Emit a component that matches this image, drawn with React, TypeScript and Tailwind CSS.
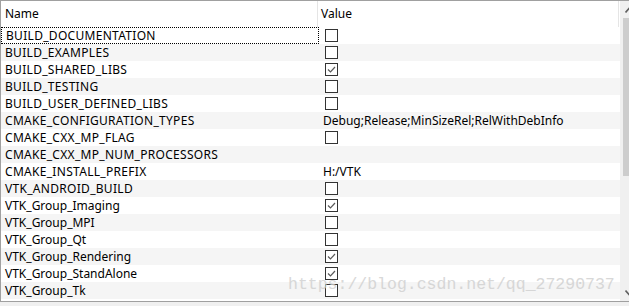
import React from 'react';

type Entry = {
  name: string;
  kind: 'bool' | 'text';
  checked?: boolean;
  value?: string;
};

const entries: Entry[] = [
  { name: 'BUILD_DOCUMENTATION', kind: 'bool', checked: false },
  { name: 'BUILD_EXAMPLES', kind: 'bool', checked: false },
  { name: 'BUILD_SHARED_LIBS', kind: 'bool', checked: true },
  { name: 'BUILD_TESTING', kind: 'bool', checked: false },
  { name: 'BUILD_USER_DEFINED_LIBS', kind: 'bool', checked: false },
  { name: 'CMAKE_CONFIGURATION_TYPES', kind: 'text', value: 'Debug;Release;MinSizeRel;RelWithDebInfo' },
  { name: 'CMAKE_CXX_MP_FLAG', kind: 'bool', checked: false },
  { name: 'CMAKE_CXX_MP_NUM_PROCESSORS', kind: 'text', value: '' },
  { name: 'CMAKE_INSTALL_PREFIX', kind: 'text', value: 'H:/VTK' },
  { name: 'VTK_ANDROID_BUILD', kind: 'bool', checked: false },
  { name: 'VTK_Group_Imaging', kind: 'bool', checked: true },
  { name: 'VTK_Group_MPI', kind: 'bool', checked: false },
  { name: 'VTK_Group_Qt', kind: 'bool', checked: false },
  { name: 'VTK_Group_Rendering', kind: 'bool', checked: true },
  { name: 'VTK_Group_StandAlone', kind: 'bool', checked: true },
  { name: 'VTK_Group_Tk', kind: 'bool', checked: false },
];

const CheckBox: React.FC<{ checked?: boolean }> = ({ checked }) => (
  <div className="w-[13px] h-[13px] border border-[#333333] bg-white flex items-center justify-center">
    {checked && (
      <svg width="11" height="11" viewBox="0 0 11 11">
        <path d="M2 5.5 L4.5 8 L9 3" fill="none" stroke="#5a5a5a" strokeWidth="1.2" />
      </svg>
    )}
  </div>
);

export default function App() {
  return (
    <div
      className="relative w-[629px] h-[306px] overflow-hidden bg-[#f0f0f0] text-[12px] text-black"
      style={{ fontFamily: '"Noto Sans", "Open Sans", sans-serif' }}
    >
      <div className="flex h-[302px] border-t border-b border-l border-[#a0a0a0] bg-white">
        {/* table */}
        <div className="w-[619px] flex-none flex flex-col">
          <div className="flex h-[26px] flex-none items-center bg-white">
            <div className="w-[317px] h-full flex items-center pl-[4px] border-r border-[#e5e5e5]">Name</div>
            <div className="w-[301px] h-full flex items-center pl-[3px] border-r border-[#e5e5e5]">Value</div>
          </div>
          {entries.map((e, i) => (
            <div
              key={e.name}
              className={`flex h-[17px] flex-none ${i % 2 === 1 ? 'bg-[#f5f5f5]' : 'bg-white'}`}
            >
              <div
                className={`w-[318px] flex items-center pl-[4px] leading-none ${
                  i === 0 ? 'border border-dotted border-black pl-[3px]' : ''
                }`}
              >
                {/* upper-case names render a bit wider in the original UI font */}
                <span className={e.name === e.name.toUpperCase() ? 'tracking-[0.3px]' : ''}>{e.name}</span>
              </div>
              <div className="flex-1 flex items-center leading-none">
                {e.kind === 'bool' ? (
                  <div className="pl-[6px]">
                    <CheckBox checked={e.checked} />
                  </div>
                ) : (
                  <span className="pl-[4px]">{e.value}</span>
                )}
              </div>
            </div>
          ))}
        </div>
        {/* vertical scrollbar */}
        <div className="w-[17px] flex-none flex flex-col bg-[#f0f0f0] border-l border-[#f0f0f0]">
          <div className="h-[17px] flex items-center justify-center">
            <svg width="9" height="6" viewBox="0 0 9 6">
              <path d="M0.5 5.5 L4.5 1 L8.5 5.5" fill="none" stroke="#606060" strokeWidth="1.6" />
            </svg>
          </div>
          <div className="h-[158px] mx-[2px] bg-[#cdcdcd]" />
          <div className="flex-1" />
          <div className="h-[17px] flex items-center justify-center">
            <svg width="9" height="6" viewBox="0 0 9 6">
              <path d="M0.5 0.5 L4.5 5 L8.5 0.5" fill="none" stroke="#606060" strokeWidth="1.6" />
            </svg>
          </div>
        </div>
      </div>
      {/* watermark */}
      <div
        className="absolute left-[288px] top-[277px] text-[16.5px] leading-none text-[#cfcfcf] whitespace-nowrap opacity-80"
        style={{ fontFamily: '"Liberation Mono", monospace' }}
      >
        https://blog.csdn.net/qq_27290737
      </div>
    </div>
  );
}
